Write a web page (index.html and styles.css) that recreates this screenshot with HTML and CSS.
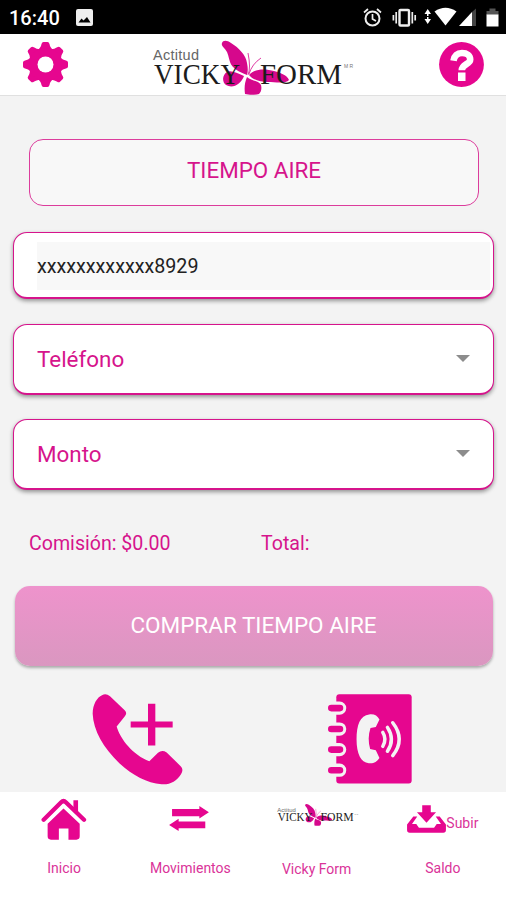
FILE: index.html
```
<!DOCTYPE html>
<html lang="es">
<head>
	<meta charset="utf-8">
	<title>Tiempo Aire</title>
	<link rel="stylesheet" href="styles.css">
</head>

<body>
	<div class="status">
		<span class="clock">16:40</span>
		<svg class="photo" width="17" height="17" viewBox="0 0 17 17">
			<rect width="17" height="17" rx="2" fill="#eee"/>
			<path d="M2.5 13.5L5.5 9.5L7.5 11.5L11 8L14.5 13.5Z" fill="#000"/>
		</svg>
		<svg class="signals" width="144" height="34" viewBox="362 0 144 34">
			<g fill="none" stroke="#eee" stroke-width="2">
				<circle cx="372.5" cy="18.5" r="7"/>
				<path d="M372.5 14V19L376 21M364 12.5L368 9M381 12.5L377 9" stroke-width="1.7"/>
				<rect x="399.5" y="10" width="9.5" height="15.5" rx="1" stroke-width="2.4"/>
				<path d="M396.2 12V23.5M412.3 12V23.5M393.4 15V20.5M415.2 15V20.5" stroke-width="1.7"/>
			</g>
			<g fill="#fff">
				<path d="M427.7 9L431 14H428.5V16H427V14H424.5ZM427.7 24L431 19H428.5V17H427V19H424.5Z"/>
				<path d="M434.5 11.5Q445.5 4 456.5 11.5L445.5 25.5Z"/>
				<path d="M472 12V26H459Z"/>
				<path d="M472 12L476 8.5V26H472Z" fill="#444"/>
				<path d="M486.5 11H489.5V8.5H495.5V11H498.5V15H486.5Z" fill="#555"/>
				<rect x="486.5" y="14.5" width="12" height="12"/>
			</g>
		</svg>
	</div>

	<div class="header">
		<svg width="45" height="45" viewBox="-22.5 -22.5 45 45" fill="#e6068f">
			<path id="tooth" d="M-7.5 -14.5C-5 -17 -4.6 -18 -4 -20.5Q-3.5 -22.5 -2 -22.5H2Q3.5 -22.5 4 -20.5C4.6 -18 5 -17 7.5 -14.5Z"/>
			<use href="#tooth" transform="rotate(45)"/>
			<use href="#tooth" transform="rotate(90)"/>
			<use href="#tooth" transform="rotate(135)"/>
			<use href="#tooth" transform="rotate(180)"/>
			<use href="#tooth" transform="rotate(225)"/>
			<use href="#tooth" transform="rotate(270)"/>
			<use href="#tooth" transform="rotate(315)"/>
			<circle r="12" fill="none" stroke="#e6068f" stroke-width="9"/>
			<circle r="8" fill="#fff"/>
		</svg>
		<svg class="logo" width="220" height="61" viewBox="0 0 220 61">
			<g id="logo">
				<g fill="#d6088c">
					<path d="M82 9C83 6 87 6 91 9C99 14 106 21 107 29C108 34 108 38 107 41C99 38 92 34 90 28C88 21 88 18 84 14Q81 11 82 9Z"/>
					<path d="M104 42C97 39 91 36 87 38C82 41 82 48 86 51C93 55 101 50 104 42Z"/>
					<path d="M109 41C115 34 126 35 134 37C141 39 147 41 149 46C146 50 135 48 128 48C120 48 113 46 109 41Z"/>
					<path d="M107 43C111 47 118 46 121 51C122 55 121 58 119 60C115 61 109 61 105 60C104 53 105 48 107 43Z"/>
				</g>
				<path d="M108 41Q111 34 108 19M109 40Q112 30 121 24" fill="none" stroke="#d6088c" stroke-width=".8"/>
				<text x="13" y="26" class="logo-small" textLength="46">Actitud</text>
				<text x="14" y="49.5" class="logo-big" textLength="86" lengthAdjust="spacingAndGlyphs">VICKY</text>
				<text x="120" y="49.5" class="logo-big" textLength="82" lengthAdjust="spacingAndGlyphs">FORM</text>
				<text x="204" y="34" class="logo-tm" textLength="9">MR</text>
			</g>
		</svg>
		<svg class="help" width="45" height="45" viewBox="0 0 45 45">
			<circle cx="22.5" cy="22.5" r="22.4" fill="#e6068f"/>
			<path d="M14.5 18.8C15.5 13 18.5 11 23 11C28 11 31.2 13.5 31.2 17.5C31.2 22.5 22.8 22 22.8 28.3" fill="none" stroke="#fff" stroke-width="6.6"/>
			<rect x="19" y="30.5" width="7.5" height="8.5" fill="#fff"/>
		</svg>
	</div>

	<div class="content">
		<div class="title">TIEMPO AIRE</div>
		<div class="field"><div class="account">xxxxxxxxxxxx8929</div></div>
		<div class="field select">Teléfono<i class="arrow"></i></div>
		<div class="field select">Monto<i class="arrow"></i></div>
		<div class="totals">
			<span>Comisión: $0.00</span>
			<span>Total:</span>
		</div>
		<button>COMPRAR TIEMPO AIRE</button>
		<div class="contacts">
			<svg width="91" height="91" viewBox="36 41 273 272" fill="#e6068f">
				<path d="M66 44Q78 38 90 47L134 89Q143 98 134 108L110 138C120 175 160 225 208 242L234 217Q246 207 260 216L302 257Q312 267 303 281C290 302 270 313 245 311C200 307 160 286 118 248C70 202 40 150 38 100C38 70 52 50 66 44Z"/>
				<path d="M204 70H226V123H278V141H226V195H204V141H152V123H204Z"/>
			</svg>
			<svg width="84" height="90" viewBox="52 42 253 270">
				<rect x="77" y="42" width="227" height="269" rx="9" fill="#e6068f"/>
				<g fill="none" stroke="#f3f3f3" stroke-width="40" stroke-linecap="round">
					<path d="M66 84H87M66 147H87M66 209H87M66 271H87"/>
				</g>
				<g fill="none" stroke="#e6068f" stroke-width="20" stroke-linecap="round">
					<path d="M62 84H88M62 147H88M62 209H88M62 271H88"/>
				</g>
				<path d="M176 103C192 101 200 107 207 118L196 141L180 144C173 165 173 187 179 207L196 211L207 234C199 246 189 252 175 250C151 248 138 222 138 178C138 134 149 106 176 103Z" fill="#f3f3f3"/>
				<g fill="none" stroke="#f3f3f3" stroke-width="10.5" stroke-linecap="round">
					<path d="M217 157Q230 178 217 199M231 142Q255 178 231 214M247 128Q286 178 247 227"/>
				</g>
			</svg>
		</div>
	</div>

	<div class="menu">
		<div class="item">
			<div class="icon">
				<svg width="46" height="42" viewBox="124 38 137 127" fill="#e6068f">
					<path d="M131 104L184 51Q191 44 198 51L253 104" fill="none" stroke="#e6068f" stroke-width="13" stroke-linecap="round"/>
					<path d="M221 45H235V82L221 69Z"/>
					<path d="M191 70L240 116V154Q240 164 230 164H206V130H177V164H153Q143 164 143 154V116Z"/>
				</svg>
			</div>
			<span>Inicio</span>
		</div>
		<div class="item">
			<div class="icon moves">
				<svg width="40" height="25" viewBox="508 62 121 76" fill="#e6068f">
					<path d="M517 71H600V62L629 81L600 100V93H517Z"/>
					<path d="M618 109H537V101L508 120L537 138V130H618Z"/>
				</svg>
			</div>
			<span>Movimientos</span>
		</div>
		<div class="item vicky">
			<div class="icon">
				<svg width="89" height="25" viewBox="0 0 220 61"><use href="#logo"/></svg>
			</div>
			<span>Vicky Form</span>
		</div>
		<div class="item">
			<div class="icon">
				<svg width="39" height="28" viewBox="465 59 118 85" fill="#e6068f">
					<path d="M511 60H537V81H553L524 113L495 81H511Z"/>
					<path d="M484 94L465 118V135Q465 143 473 143H575Q583 143 583 135V118L564 94H552L568 117H555L547 128H501L493 117H480L496 94Z"/>
				</svg>
				<span>Subir</span>
			</div>
			<span>Saldo</span>
		</div>
	</div>
</body>
</html>
```

FILE: styles.css
```
* {
	box-sizing:border-box;
}
body {
	margin:0;
	width:506px;
	height:900px;
	overflow:hidden;
	display:flex;
	flex-direction:column;
	background:#f3f3f3;
	color:#d6148c;
	font-family:Roboto, sans-serif;
}
svg {display:block;flex:none;}

.logo-small {font:14.5px "Liberation Sans", sans-serif;fill:#666;}
.logo-big {font:30px "Liberation Serif", serif;fill:#1c1c1c;}
.logo-tm {font:5px "Liberation Sans", sans-serif;fill:#777;}

.status {
	flex:none;
	height:34px;
	padding-left:9px;
	display:flex;
	align-items:center;
	background:#000;
	color:#fff;
}
.clock {
	width:50px;
	font-size:20px;
	font-weight:500;
	padding-top:2px;
}
.photo {margin-left:17px;}
.signals {margin-left:auto;}

.header {
	flex:none;
	height:62px;
	padding:0 22px 0 23px;
	display:flex;
	align-items:center;
	background:#fff;
	border-bottom:1px solid #e0e0e0;
}
.logo {margin-left:72px;}
.help {margin-left:auto;}

.content {
	flex:none;
	height:696px;
	padding:43px 12px 0 13px;
}
.title {
	height:67px;
	margin:0 15px 0 16px;
	border:1px solid #dc3c9c;
	border-radius:14px;
	background:#f8f8f8;
	text-align:center;
	font-size:22.4px;
	line-height:61px;
}
.field {
	height:67px;
	margin-top:26px;
	padding:9px 3px 9px 23px;
	border:1px solid #d6148c;
	border-bottom-width:2px;
	border-radius:14px;
	background:#fff;
	box-shadow:0 2px 4px rgba(0,0,0,.4);
}
.account {
	height:48px;
	background:#f8f8f8;
	color:#222;
	font-size:19.7px;
	line-height:49px;
}
.select {
	height:71px;
	margin-top:25px;
	padding-right:23px;
	display:flex;
	justify-content:space-between;
	align-items:center;
	font-size:22.4px;
}
.select + .select {margin-top:24px;}
.arrow {
	margin-top:-2px;
	border:7px solid transparent;
	border-top-color:#8c8c8c;
	border-bottom:0;
}
.totals {
	display:grid;
	grid-template-columns:232px 1fr;
	margin:42px 0 0 16px;
	font-size:19.6px;
	line-height:24px;
}
button {
	display:block;
	width:478px;
	height:80px;
	margin:30px 0 0 1.5px;
	padding:0 0 2px;
	border:0;
	border-radius:15px;
	background:linear-gradient(#ee93cc, #da97c0);
	box-shadow:0 2px 3px rgba(0,0,0,.3);
	color:#fff;
	font-family:inherit;
	font-size:22.5px;
}
.contacts {
	display:flex;
	justify-content:space-between;
	padding:28px 82px 0 79px;
}

.menu {
	flex:none;
	height:108px;
	padding:6px 0 0 1px;
	display:grid;
	grid-template-columns:repeat(4, 1fr);
	background:#fff;
	color:#da3399;
	font-size:14px;
	line-height:20px;
}
.item {
	display:flex;
	flex-direction:column;
	align-items:center;
}
.icon {
	height:42px;
	margin-bottom:18px;
	display:flex;
	align-items:center;
}
.moves {
	padding:0 2px 2px 0;
}
.icon span {padding-top:7px;}
.vicky .icon {
	padding-bottom:11px;
	margin-bottom:19px;
}
```
